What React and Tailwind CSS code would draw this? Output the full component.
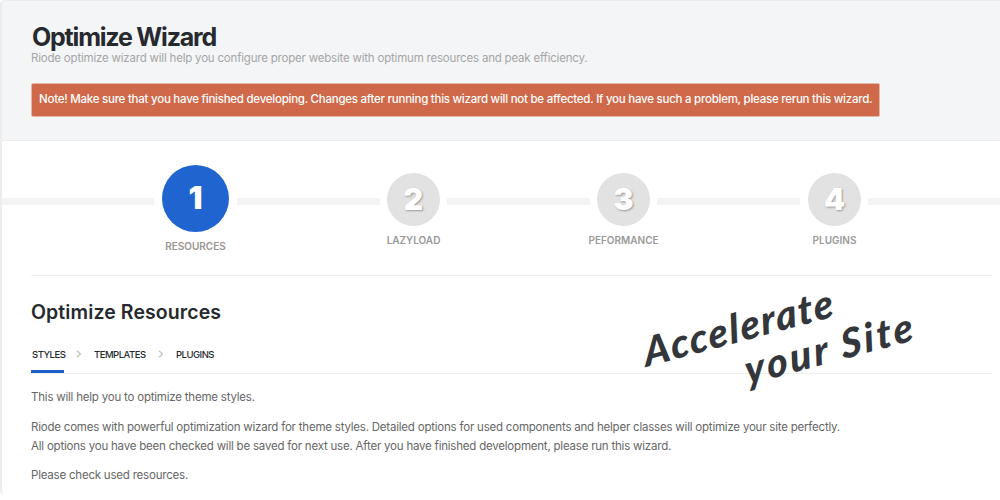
const steps = [
  { num: '1', label: 'RESOURCES', active: true },
  { num: '2', label: 'LAZYLOAD' },
  { num: '3', label: 'PEFORMANCE' },
  { num: '4', label: 'PLUGINS' },
];

const font = "font-['Inter','Noto_Sans',sans-serif]";

const Line = ({ className }) => <div className={`mt-[33px] h-[7px] bg-[#f3f3f3] ${className}`} />;

const Step = ({ num, label, active }) => {
  if (active) {
    return (
      <div className="flex w-[67px] shrink-0 flex-col items-center">
        <div className="flex h-[67px] w-[67px] items-center justify-center rounded-full bg-[#2065cf] text-[31px] font-black text-white">
          {num}
        </div>
        <div className="mt-[8px] whitespace-nowrap text-[10px] font-semibold leading-[13px] text-[#9a9590]">{label}</div>
      </div>
    );
  }
  return (
    <div className="flex w-[53px] shrink-0 flex-col items-center pt-[8px]">
      <div className="flex h-[53px] w-[53px] items-center justify-center rounded-full bg-[#e2e2e2] text-[30px] font-black text-white [text-shadow:1px_1px_2px_#999]">
        {num}
      </div>
      <div className="mt-[8px] whitespace-nowrap text-[10px] font-semibold leading-[13px] text-[#999]">{label}</div>
    </div>
  );
};

const Chevron = () => (
  <svg width="6" height="8" viewBox="0 0 6 8" fill="none" stroke="#c8c8c8" strokeWidth="1.5">
    <path d="M1 .8 4.4 4 1 7.2" />
  </svg>
);

export default function App() {
  return (
    <div className={`relative h-[500px] w-[1000px] overflow-hidden bg-white ${font}`}>
      <div className="h-[495px] overflow-hidden rounded-l-[5px] border-t border-l-2 border-[#ececec]">
        <header className="h-[140px] border-b border-dotted border-[#e4e4e4] bg-[#f4f5f7] pl-[29px] pt-[21px]">
          <h1 className="pl-px text-[25px] font-bold leading-[30px] tracking-[-1.2px] text-[#26292e]">Optimize Wizard</h1>
          <p className="text-[11.5px] leading-[13px] tracking-[-0.2px] text-[#a5a5a5]">
            Riode optimize wizard will help you configure proper website with optimum resources and peak efficiency.
          </p>
          <div className="mt-[18px] flex h-[34px] w-[849px] items-center whitespace-nowrap rounded-[2px] border border-[#e6b7a8] bg-[#d0694a] pl-[7px] text-[11.5px] font-medium tracking-[-0.25px] text-white">
            Note! Make sure that you have finished developing. Changes after running this wizard will not be affected. If you have such a problem, please rerun this wizard.
          </div>
        </header>

        <section className="flex items-start pt-[24px]">
          <Line className="mr-[8px] w-[152px]" />
          <Step {...steps[0]} />
          <Line className="ml-[8px] mr-[7px] w-[143px]" />
          <Step {...steps[1]} />
          <Line className="mx-[7px] w-[143px]" />
          <Step {...steps[2]} />
          <Line className="ml-[7px] mr-[8px] w-[143px]" />
          <Step {...steps[3]} />
          <Line className="ml-[7px] flex-1" />
        </section>

        <main className="mx-[29px] mt-[22px] w-[961px] border-t border-[#ebebeb] pt-[23px]">
          <h2 className="text-[19.5px] font-semibold leading-[26px] tracking-[0.1px] text-[#26292e]">Optimize Resources</h2>
          <nav className="mt-[23px] flex h-[26px] items-start border-b border-[#eeeeee] pl-px text-[9.5px] font-medium leading-[13px] tracking-[-0.5px] text-[#26292e]">
            <span className="-ml-px h-[25px] w-[33px] border-b-[3px] border-[#1f5fc9] pl-px">STYLES</span>
            <span className="mx-[12px] mt-[2px]"><Chevron /></span>
            <span className="w-[52px]">TEMPLATES</span>
            <span className="mx-[12px] mt-[2px]"><Chevron /></span>
            <span>PLUGINS</span>
          </nav>
          <div className="mt-[14px] text-[11.5px] leading-[19px] tracking-[-0.21px] text-[#666]">
            <p>This will help you to optimize theme styles.</p>
            <p className="mt-[11px]">
              Riode comes with powerful optimization wizard for theme styles. Detailed options for used components and helper classes will optimize your site perfectly.
              <br />
              All options you have been checked will be saved for next use. After you have finished development, please run this wizard.
            </p>
            <p className="mt-[10px]">Please check used resources.</p>
          </div>
        </main>
      </div>

      {/* handwritten tagline over the content */}
      <div className="absolute left-[644px] top-[332px] origin-left -rotate-[15deg] -skew-x-6 whitespace-nowrap font-['Lato',sans-serif] text-[40px] font-black italic leading-none tracking-[1.8px] text-[#33363a]">
        Accelerate
      </div>
      <div className="absolute left-[745px] top-[350px] origin-left -rotate-[15deg] -skew-x-6 whitespace-nowrap font-['Lato',sans-serif] text-[40px] font-black italic leading-none tracking-[3px] text-[#33363a]">
        your Site
      </div>
    </div>
  );
}
